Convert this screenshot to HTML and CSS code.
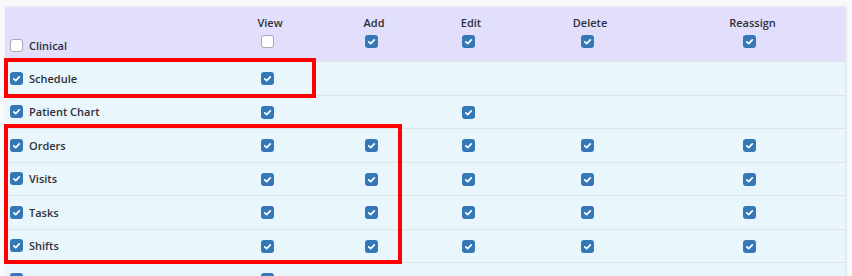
FILE: index.html
```html
<!DOCTYPE html>
<html lang="en">
<head>
  <meta charset="UTF-8" />
  <title>Permissions</title>
  <link rel="stylesheet" href="styles.css">
</head>
<body>
  <div class="perm-table">
    <div class="perm-head">
      <div class="cell first">
        <span class="box"></span> Clinical
      </div>
      <div class="cell col"><span class="label">View</span><span class="box"></span></div>
      <div class="cell col"><span class="label">Add</span><span class="box on"></span></div>
      <div class="cell col"><span class="label">Edit</span><span class="box on"></span></div>
      <div class="cell col"><span class="label">Delete</span><span class="box on"></span></div>
      <div class="cell col"><span class="label">Reassign</span><span class="box on"></span></div>
    </div>

    <div class="perm-row">
      <div class="cell first"><span class="box on"></span> Schedule</div>
      <div class="cell col"><span class="box on"></span></div>
      <div class="cell col"></div>
      <div class="cell col"></div>
      <div class="cell col"></div>
      <div class="cell col"></div>
    </div>
    <div class="perm-row">
      <div class="cell first"><span class="box on"></span> Patient Chart</div>
      <div class="cell col"><span class="box on"></span></div>
      <div class="cell col"></div>
      <div class="cell col"><span class="box on"></span></div>
      <div class="cell col"></div>
      <div class="cell col"></div>
    </div>
    <div class="perm-row">
      <div class="cell first"><span class="box on"></span> Orders</div>
      <div class="cell col"><span class="box on"></span></div>
      <div class="cell col"><span class="box on"></span></div>
      <div class="cell col"><span class="box on"></span></div>
      <div class="cell col"><span class="box on"></span></div>
      <div class="cell col"><span class="box on"></span></div>
    </div>
    <div class="perm-row">
      <div class="cell first"><span class="box on"></span> Visits</div>
      <div class="cell col"><span class="box on"></span></div>
      <div class="cell col"><span class="box on"></span></div>
      <div class="cell col"><span class="box on"></span></div>
      <div class="cell col"><span class="box on"></span></div>
      <div class="cell col"><span class="box on"></span></div>
    </div>
    <div class="perm-row">
      <div class="cell first"><span class="box on"></span> Tasks</div>
      <div class="cell col"><span class="box on"></span></div>
      <div class="cell col"><span class="box on"></span></div>
      <div class="cell col"><span class="box on"></span></div>
      <div class="cell col"><span class="box on"></span></div>
      <div class="cell col"><span class="box on"></span></div>
    </div>
    <div class="perm-row">
      <div class="cell first"><span class="box on"></span> Shifts</div>
      <div class="cell col"><span class="box on"></span></div>
      <div class="cell col"><span class="box on"></span></div>
      <div class="cell col"><span class="box on"></span></div>
      <div class="cell col"><span class="box on"></span></div>
      <div class="cell col"><span class="box on"></span></div>
    </div>
    <div class="perm-row">
      <div class="cell first"><span class="box on"></span> Medication Profile</div>
      <div class="cell col"><span class="box on"></span></div>
      <div class="cell col"></div>
      <div class="cell col"></div>
      <div class="cell col"></div>
      <div class="cell col"></div>
    </div>

    <!-- annotation boxes -->
    <div class="mark mark-schedule"></div>
    <div class="mark mark-group"></div>
  </div>
</body>
</html>
```

FILE: styles.css
```css
body {
  margin: 0;
  background: #f9f9fd;
  font-family: 'Open Sans', 'Noto Sans', sans-serif;
  font-size: 11px;
  font-weight: 600;
  color: #30303c;
}
.perm-table {
  position: relative;
  margin: 7px 0 0 5px;
  width: 840px;
  box-shadow: 1px 0 3px rgba(0, 0, 0, 0.12);
}
.perm-head,
.perm-row {
  display: grid;
  grid-template-columns: 209px 112px 96px 98px 140px 185px;
}
.perm-head {
  height: 54px;
  background: #e1dffb;
}
.perm-row {
  height: 33.5px;
  box-sizing: border-box;
  background: #e9f6fb;
  border-top: 1px solid #dde3e7;
  align-items: center;
}
.cell.first {
  display: flex;
  align-items: center;
  gap: 6px;
  padding-left: 5px;
}
.perm-head .cell.first {
  align-self: end;
  padding-bottom: 8px;
}
.cell.col {
  display: flex;
  flex-direction: column;
  align-items: center;
}
.perm-row .cell.col {
  padding-top: 1px;
}
.perm-head .cell.col {
  padding-top: 8px;
  gap: 5px;
}
.label {
  line-height: 15px;
}
.box {
  display: inline-block;
  width: 13px;
  height: 13px;
  box-sizing: border-box;
  border-radius: 3px;
  background: #fff;
  border: 1px solid #a9a9b3;
  flex: none;
}
.cell.col .box {
  margin-right: 6px;
}
.box.on {
  border: none;
  background: #3478b8 no-repeat center / 13px 13px;
  background-image: url("data:image/svg+xml,%3Csvg xmlns='http://www.w3.org/2000/svg' viewBox='0 0 13 13'%3E%3Cpath d='M3.8 6.8l1.9 1.8 3.6-3.8' fill='none' stroke='%23fff' stroke-width='1.7' stroke-linecap='round' stroke-linejoin='round'/%3E%3C/svg%3E");
}
.mark {
  position: absolute;
  border: 4px solid #ff0000;
  box-sizing: border-box;
}
.mark-schedule {
  left: -1px;
  top: 51px;
  width: 312px;
  height: 40px;
}
.mark-group {
  left: -1px;
  top: 117px;
  width: 398px;
  height: 140px;
}
```
